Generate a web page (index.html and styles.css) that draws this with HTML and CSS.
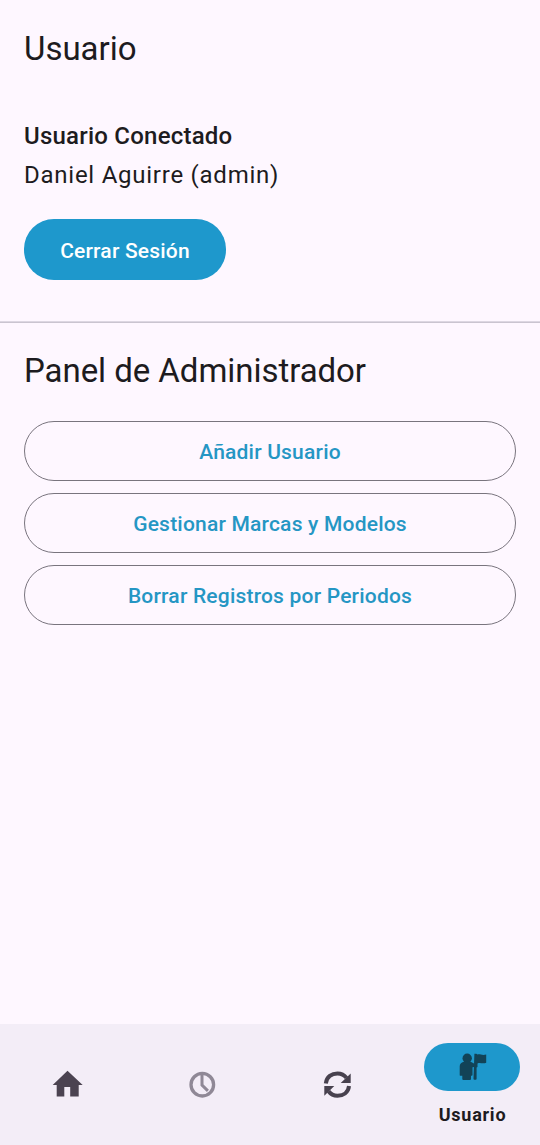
FILE: index.html
```html
<!DOCTYPE html>
<html lang="es">
<head>
<meta charset="utf-8">
<title>Usuario</title>
<link rel="stylesheet" href="styles.css">
</head>
<body>
<div class="screen">
  <main class="content">
    <section class="account">
      <h1 class="title">Usuario</h1>
      <h2 class="subtitle">Usuario Conectado</h2>
      <p class="name">Daniel Aguirre (admin)</p>
      <button class="button button-filled">Cerrar Sesión</button>
    </section>
    <div class="divider"></div>
    <section class="admin">
      <h1 class="title title-admin">Panel de Administrador</h1>
      <div class="actions">
        <button class="button button-outlined">Añadir Usuario</button>
        <button class="button button-outlined">Gestionar Marcas y Modelos</button>
        <button class="button button-outlined">Borrar Registros por Periodos</button>
      </div>
    </section>
  </main>
  <nav class="nav">
    <a class="nav-item">
      <svg class="icon" viewBox="0.5 0.5 36 36"><path fill="#4b4351" d="M18 4.200 3.200 18.400H7.200v11.600h7.600v-9.600h5.900v9.600h8.500V18.400h4z"/></svg>
    </a>
    <a class="nav-item">
      <svg class="icon" viewBox="0.5 0.5 36 36" fill="none" stroke="#8f8896" stroke-width="3.300"><circle cx="17.800" cy="18.200" r="11.300"/><path stroke-width="3" d="M17.500 8v10.600l5.900 5.800"/></svg>
    </a>
    <a class="nav-item">
      <svg class="icon" viewBox="0.5 0.5 36 36"><g fill="none" stroke="#47414e" stroke-width="4"><path d="M6.300 17C7 10.300 12.300 6.900 18 6.900c4.300 0 7 1.800 9 4.500"/><path d="M29.500 19.500C28.800 26.200 23.500 29.200 18 29.200c-4.300 0-7-1.800-9-4.500"/></g><path fill="#47414e" d="M31.200 7v9.600h-10zM4.800 29.200V19.600h10z"/></svg>
    </a>
    <a class="nav-item nav-item-active">
      <span class="pill">
        <svg class="icon" viewBox="0 0 36 36" fill="#124357"><circle cx="13.200" cy="9.200" r="4.700"/><path d="M9.800 12.800h6.800l3.400 1.700v3.400l-1.500.4v7.700q0 .8-.8.8H17v3.200q0 1-1 1H9.300q-1 0-1-1v-3.200H6.600q-.9 0-.9-.9v-8.400q0-3.600 4.100-4.700z"/><path d="M20.400 4.700h1.800q.9 0 .9.900c2.800-1 4.800 1.100 9.100-.1v8.300c-3.600 1.400-6-.6-8.700.6v3.500l-.9.7v11.200q0 .9-.9.900h-1.300q-.9 0-.9-.9z"/></svg>
      </span>
      <span class="nav-label">Usuario</span>
    </a>
  </nav>
</div>
</body>
</html>
```
FILE: styles.css
```css
* {
  box-sizing: border-box;
}

body {
  margin: 0;
  background: #fef7ff;
  color: #1d1b20;
  font-family: Roboto, sans-serif;
}

.screen {
  display: flex;
  flex-direction: column;
  height: 1145px;
}

.content {
  flex: 1;
}

.account {
  height: 321px;
  padding: 28px 24px 0;
}

.divider {
  height: 2px;
  border-top: 1px solid #ddd7e2;
  border-bottom: 1px solid #cac4d0;
}

.admin {
  padding: 27px 24px 0;
}

.title {
  margin: 0;
  font-size: 33px;
  font-weight: 400;
  line-height: 42px;
}

.title-admin {
  letter-spacing: -0.05px;
}

.subtitle {
  margin: 48px 0 0;
  font-size: 24px;
  font-weight: 500;
  line-height: 36px;
  letter-spacing: 0.225px;
}

.name {
  margin: 3px 0 26px;
  font-size: 24px;
  line-height: 36px;
  letter-spacing: 0.75px;
}

.button {
  display: block;
  height: 60px;
  padding: 2px 36px 0;
  border: 0;
  border-radius: 30px;
  font: 500 21px/30px Roboto, sans-serif;
  letter-spacing: 0.2px;
}

.button-filled {
  width: 202px;
  height: 61px;
  background: #1e98cc;
  color: #fff;
}

.button-outlined {
  width: 100%;
  border: 1.5px solid #79747e;
  background: transparent;
  color: #2596c4;
}

.actions {
  display: flex;
  flex-direction: column;
  gap: 12px;
  margin-top: 29px;
}

.nav {
  display: grid;
  grid-template-columns: repeat(4, 1fr);
  height: 121px;
  background: #f3edf7;
}

.nav-item {
  display: flex;
  flex-direction: column;
  align-items: center;
  justify-content: center;
}

.nav-item-active {
  justify-content: flex-start;
  padding-top: 18.5px;
}

.icon {
  display: block;
  width: 36px;
  height: 36px;
}

.pill {
  display: flex;
  align-items: center;
  justify-content: center;
  width: 96px;
  height: 48px;
  margin-right: 1px;
  border-radius: 24px;
  background: #1e98cc;
}

.nav-label {
  margin-top: 12px;
  font-size: 18px;
  font-weight: 700;
  line-height: 24px;
  letter-spacing: 0.75px;
}
```
